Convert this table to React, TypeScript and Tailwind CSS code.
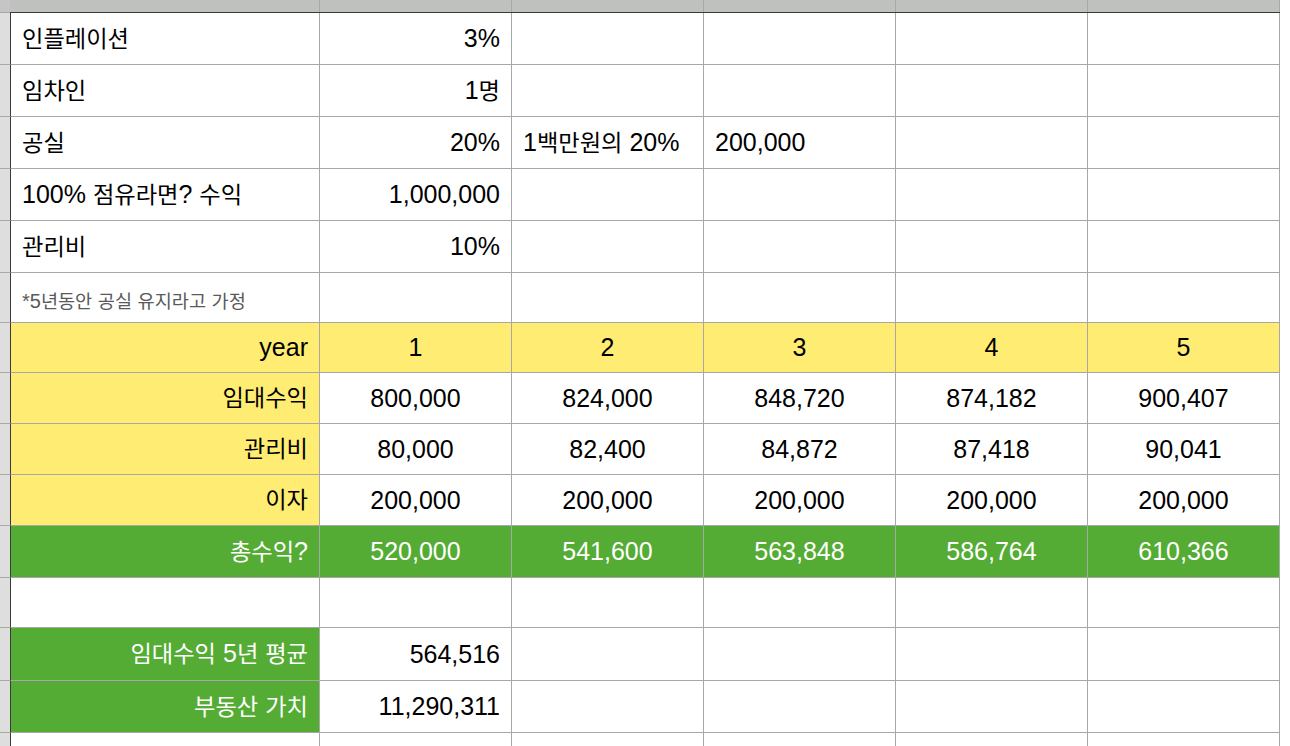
import React from "react";

type Align = "left" | "right" | "center";
type Fill = "yellow" | "green" | undefined;

type Cell = {
  text?: string;
  align?: Align;
  fill?: Fill;
  note?: boolean;
};

type Row = {
  h: string;
  cells: Cell[];
};

const FONT = {
  fontFamily: '"Liberation Sans", "Noto Sans CJK KR", sans-serif',
};

// Hangul in Noto CJK is wider than the mac font, so shrink it a bit
function Txt({ text }: { text: string }) {
  const parts = text.split(/([\uAC00-\uD7A3]+)/);
  return (
    <>
      {parts.map((p, i) =>
        /[\uAC00-\uD7A3]/.test(p) ? (
          <span key={i} className="text-[0.93em]">
            {p}
          </span>
        ) : (
          <span key={i}>{p}</span>
        ),
      )}
    </>
  );
}

const L = (text: string): Cell => ({ text, align: "left" });
const R = (text: string): Cell => ({ text, align: "right" });
const C = (text: string): Cell => ({ text, align: "center" });
const E: Cell = {};

const yearRow = (label: string, vals: string[]): Cell[] => [
  { text: label, align: "right", fill: "yellow" },
  ...vals.map((v) => C(v)),
];

const rows: Row[] = [
  { h: "h-[52px]", cells: [L("인플레이션"), R("3%"), E, E, E, E] },
  { h: "h-[52px]", cells: [L("임차인"), R("1명"), E, E, E, E] },
  {
    h: "h-[52px]",
    cells: [L("공실"), R("20%"), L("1백만원의 20%"), L("200,000"), E, E],
  },
  {
    h: "h-[52px]",
    cells: [L("100% 점유라면? 수익"), R("1,000,000"), E, E, E, E],
  },
  { h: "h-[52px]", cells: [L("관리비"), R("10%"), E, E, E, E] },
  {
    h: "h-[50px]",
    cells: [{ text: "*5년동안 공실 유지라고 가정", align: "left", note: true }, E, E, E, E, E],
  },
  {
    h: "h-[50px]",
    cells: [
      { text: "year", align: "right", fill: "yellow" },
      ...["1", "2", "3", "4", "5"].map((v) => ({ text: v, align: "center" as Align, fill: "yellow" as Fill })),
    ],
  },
  {
    h: "h-[51px]",
    cells: yearRow("임대수익", ["800,000", "824,000", "848,720", "874,182", "900,407"]),
  },
  {
    h: "h-[51px]",
    cells: yearRow("관리비", ["80,000", "82,400", "84,872", "87,418", "90,041"]),
  },
  {
    h: "h-[51px]",
    cells: yearRow("이자", ["200,000", "200,000", "200,000", "200,000", "200,000"]),
  },
  {
    h: "h-[52px]",
    cells: [
      { text: "총수익?", align: "right", fill: "green" },
      ...["520,000", "541,600", "563,848", "586,764", "610,366"].map((v) => ({
        text: v,
        align: "center" as Align,
        fill: "green" as Fill,
      })),
    ],
  },
  { h: "h-[50px]", cells: [E, E, E, E, E, E] },
  {
    h: "h-[53px]",
    cells: [{ text: "임대수익 5년 평균", align: "right", fill: "green" }, R("564,516"), E, E, E, E],
  },
  {
    h: "h-[52px]",
    cells: [{ text: "부동산 가치", align: "right", fill: "green" }, R("11,290,311"), E, E, E, E],
  },
  { h: "h-[20px]", cells: [E, E, E, E, E, E] },
];

function SheetCell({ cell, first }: { cell: Cell; first: boolean }) {
  const justify =
    cell.align === "right"
      ? "justify-end"
      : cell.align === "center"
        ? "justify-center"
        : "justify-start";
  const bg =
    cell.fill === "yellow"
      ? "bg-[#feed72] text-black"
      : cell.fill === "green"
        ? "bg-[#55ac34] text-white"
        : "bg-white text-black";
  return (
    <div
      className={`flex shrink-0 items-center border-b border-r border-[#a8a8a8] px-[11px] ${justify} ${bg} ${
        first ? "w-[310px] border-l border-l-[#3a3a3a]" : "w-[192px]"
      }`}
    >
      {cell.text &&
        (cell.note ? (
          <span className="whitespace-nowrap pt-[8px] text-[20px] leading-none text-[#5a5a5a]">
            <Txt text={cell.text} />
          </span>
        ) : (
          <span className="whitespace-nowrap text-[25px] leading-none">
            <Txt text={cell.text} />
          </span>
        ))}
    </div>
  );
}

export default function App() {
  return (
    <div className="h-[746px] w-[1290px] overflow-hidden bg-white" style={FONT}>
      {/* column header strip */}
      <div className="flex h-[13px]">
        <div className="w-[10px] shrink-0 border-b border-[#a8a8a8] bg-[#c4c5c4]" />
        <div className="flex border-b border-[#3a3a3a] bg-[#bfc1bf]">
          <div className="w-[310px] shrink-0 border-r border-[#a8a8a8]" />
          {[0, 1, 2, 3, 4].map((i) => (
            <div key={i} className="w-[192px] shrink-0 border-r border-[#a8a8a8]" />
          ))}
        </div>
      </div>

      {rows.map((row, ri) => (
        <div key={ri} className={`flex ${row.h}`}>
          <div className="w-[10px] shrink-0 border-b border-[#a8a8a8] bg-[#dedede]" />
          {row.cells.map((cell, ci) => (
            <SheetCell key={ci} cell={cell} first={ci === 0} />
          ))}
        </div>
      ))}
    </div>
  );
}
